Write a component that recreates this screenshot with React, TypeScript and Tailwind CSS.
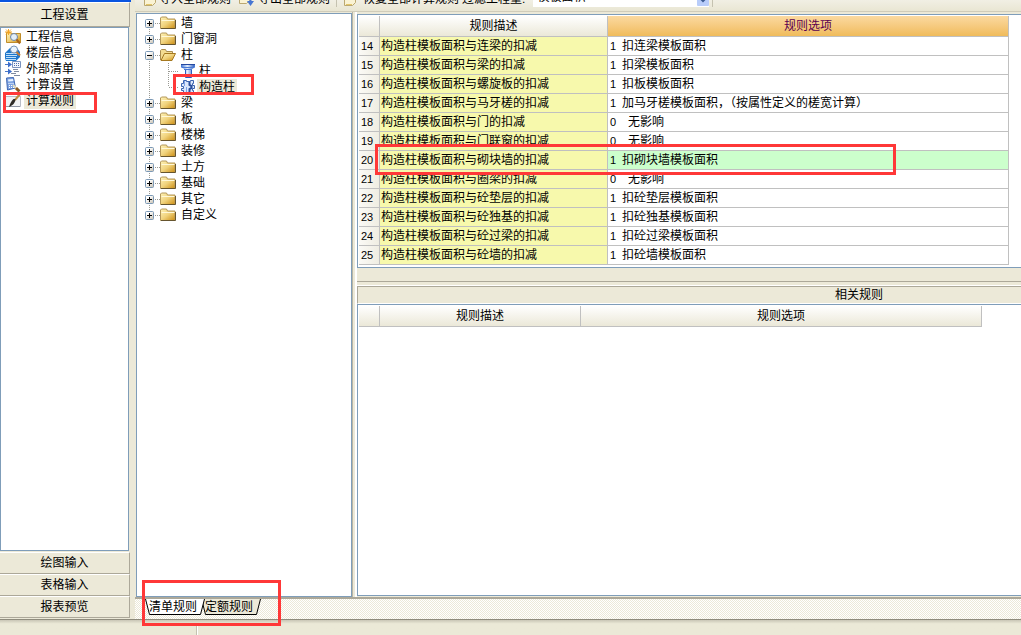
import { useState } from 'react';
import type { ReactNode } from 'react';
import clsx from 'clsx';

type Rule = {
  no: number;
  desc: string;
  code: number;
  option: string;
};

type TreeNode = {
  label: string;
  open?: boolean;
  children?: { label: string; icon: ReactNode }[];
};

const rules: Rule[] = [
  { no: 14, desc: '构造柱模板面积与连梁的扣减', code: 1, option: '扣连梁模板面积' },
  { no: 15, desc: '构造柱模板面积与梁的扣减', code: 1, option: '扣梁模板面积' },
  { no: 16, desc: '构造柱模板面积与螺旋板的扣减', code: 1, option: '扣板模板面积' },
  { no: 17, desc: '构造柱模板面积与马牙槎的扣减', code: 1, option: '加马牙槎模板面积，（按属性定义的槎宽计算）' },
  { no: 18, desc: '构造柱模板面积与门的扣减', code: 0, option: '无影响' },
  { no: 19, desc: '构造柱模板面积与门联窗的扣减', code: 0, option: '无影响' },
  { no: 20, desc: '构造柱模板面积与砌块墙的扣减', code: 1, option: '扣砌块墙模板面积' },
  { no: 21, desc: '构造柱模板面积与圈梁的扣减', code: 0, option: '无影响' },
  { no: 22, desc: '构造柱模板面积与砼垫层的扣减', code: 1, option: '扣砼垫层模板面积' },
  { no: 23, desc: '构造柱模板面积与砼独基的扣减', code: 1, option: '扣砼独基模板面积' },
  { no: 24, desc: '构造柱模板面积与砼过梁的扣减', code: 1, option: '扣砼过梁模板面积' },
  { no: 25, desc: '构造柱模板面积与砼墙的扣减', code: 1, option: '扣砼墙模板面积' },
];

// shared gradients used by all the small icons
function IconDefs() {
  return (
    <svg width="0" height="0" className="absolute" aria-hidden="true">
      <defs>
        <linearGradient id="gold" x1="0" y1="0" x2="1" y2="1">
          <stop offset="0" stopColor="#fff3b8" />
          <stop offset="0.5" stopColor="#f0d27c" />
          <stop offset="1" stopColor="#cc8d12" />
        </linearGradient>
        <linearGradient id="blue" x1="0" y1="0" x2="1" y2="0">
          <stop offset="0" stopColor="#4b7edb" />
          <stop offset="0.45" stopColor="#e6effd" />
          <stop offset="1" stopColor="#2f5fc0" />
        </linearGradient>
        <linearGradient id="box" x1="0" y1="0" x2="1" y2="1">
          <stop offset="0.3" stopColor="#ffffff" />
          <stop offset="1" stopColor="#c6beae" />
        </linearGradient>
        <pattern id="checker" width="2" height="2" patternUnits="userSpaceOnUse">
          <rect width="2" height="2" fill="#ffffff" />
          <path d="M0 0h1v1H0zM1 1h1v1H1z" fill="#ece9d8" />
        </pattern>
      </defs>
    </svg>
  );
}

function Icon({ children }: { children: ReactNode }) {
  return (
    <svg width="16" height="16" viewBox="0 0 16 16" className="shrink-0" aria-hidden="true">
      {children}
    </svg>
  );
}

const folderIcon = (
  <Icon>
    <path d="M.5 4v-1l1-1h5l1 2h7.500v9.500H.5z" fill="url(#gold)" stroke="#b3975a" />
    <path d="M1.500 5.500h13" stroke="#fff8d8" />
    <path d="M15.500 5v8.500H1" fill="none" stroke="#66552f" />
  </Icon>
);

const openFolderIcon = (
  <Icon>
    <path d="M.5 13V3.500l1-1h4l1 2h6v3" fill="#f3dc92" stroke="#a98c50" />
    <path d="M1 13.500 4.500 6.500h11l-3.500 7z" fill="url(#gold)" stroke="#a5781f" />
  </Icon>
);

const columnIcon = (
  <Icon>
    <path d="M1.500 1.500h13v3l-3 2v8h-6v-8l-4-2z" fill="url(#blue)" />
    <path d="M1 1.500h14" stroke="#2448a0" />
    <path d="M1.500 2v2.500M14.500 2v2.500M2 4.500h12M4 6.500h8" stroke="#4a7ad6" />
    <path d="M5.500 7v7.500h6V7" fill="none" stroke="#2c5cc0" />
  </Icon>
);

const toothedColumnIcon = (
  <Icon>
    <path
      d="M3.500 1.500h3v1h4v-1h3v3h-1v2h2v3h-2v2h1v3h-10v-3h-2v-2h2v-2h-2v-3h2z"
      fill="#dbe7fb"
      stroke="#3c64b0"
    />
    <path d="M4.500 2v5M6.500 8v6" stroke="#7ea3e6" />
    <path d="M9.500 3v3l2 1v2l-2 1v4" fill="none" stroke="#2a4f9c" strokeWidth="2" />
  </Icon>
);

const projectInfoIcon = (
  <Icon>
    <path d="M1.500 3.500h4l1 1h9v9h-14z" fill="url(#gold)" stroke="#c08d2a" />
    <path d="M3.500 0v6M0 3h7M1 .5l5 5M6 .5l-5 5" stroke="#f5a623" />
    <circle cx="9" cy="8" r="3.500" fill="#e3effa" stroke="#6f86a8" />
    <path d="m11.500 10.500 3.500 4" stroke="#a8651c" strokeWidth="2" />
  </Icon>
);

const floorInfoIcon = (
  <Icon>
    <path d="m0 8 5-5h7l3 4v5l-4 4H1l-1-3z" fill="#1f78cc" />
    <path d="M1 8.500h11M1 10.500h11M1 12.500h10M1 14.500h10" stroke="#bfe0fa" />
    <circle cx="9" cy="4.500" r="3.500" fill="#eaf4fc" stroke="#7792b4" />
    <path d="m11.500 7 3.500 3.500" stroke="#c07a35" strokeWidth="2" />
  </Icon>
);

const externalListIcon = (
  <Icon>
    <path d="M0 3.500h4M0 10.500h4" stroke="#4b79c8" />
    <path d="m3 .5 4 3-4 3zM3 7.500l4 3-4 3z" fill="#3c6ecb" />
    <path d="M7.500.5h8v6h-8z" fill="#f4f7fc" stroke="#7a93be" />
    <path d="M9 2.500h6M9 4.500h6" stroke="#4d6da8" strokeDasharray="1 1" />
    <path d="M8 8.500h5M9 10.500h5M6 12.500h5M9 14.500h6" stroke="#7f8ba1" />
  </Icon>
);

const calcSettingIcon = (
  <Icon>
    <path d="m1.500 1 7-.5 2 10.500-8 2z" fill="#7fa4e2" stroke="#4068b4" />
    <path d="m3 2.500 5-.5.4 2-5 .5z" fill="#e9f3ff" />
    <path d="M3.500 6.500h5M4 8.500h5M4 10.500h5" stroke="#fff" strokeDasharray="1 1" />
    <path d="m8 8 4 4" stroke="#e2dcc0" strokeWidth="2" />
    <path d="m11 11 3.500 3.500" stroke="#8a5a22" strokeWidth="3" />
  </Icon>
);

const calcRuleIcon = (
  <Icon>
    <path d="M.5 3.500h15v10H.5z" fill="#f1f2f4" stroke="#b9bdc6" />
    <path d="M0 13.500h15" stroke="#8f96a5" />
    <path d="m15 1-5 6" stroke="#c08d3c" strokeWidth="2" />
    <path d="M10.500 6c0 3-2 6-6.500 8 1-3 2-6 4.500-8z" fill="#2d2a26" />
  </Icon>
);

const sheetArrowIcon = (
  <Icon>
    <path d="M1.500 0v14.500h8l3-3V0z" fill="#faf3d4" stroke="#bba871" />
    <path d="M3 13.500h6" stroke="#e3c66a" />
    <path d="m9 8 3-3 3 3" fill="#7fa3e6" stroke="#5b83d0" />
  </Icon>
);

const exportIcon = (
  <Icon>
    <path d="M.5 0v12.500h7l3-3V0z" fill="#faf3d4" stroke="#bba871" />
    <path d="M11.500 2v9" stroke="#4776d2" strokeWidth="2" />
    <path d="M8 10h7l-3.500 5z" fill="#4776d2" />
  </Icon>
);

const tree: TreeNode[] = [
  { label: '墙' },
  { label: '门窗洞' },
  {
    label: '柱',
    open: true,
    children: [
      { label: '柱', icon: columnIcon },
      { label: '构造柱', icon: toothedColumnIcon },
    ],
  },
  { label: '梁' },
  { label: '板' },
  { label: '楼梯' },
  { label: '装修' },
  { label: '土方' },
  { label: '基础' },
  { label: '其它' },
  { label: '自定义' },
];

const settings = [
  { label: '工程信息', icon: projectInfoIcon },
  { label: '楼层信息', icon: floorInfoIcon },
  { label: '外部清单', icon: externalListIcon },
  { label: '计算设置', icon: calcSettingIcon },
  { label: '计算规则', icon: calcRuleIcon },
];

// red annotation frame drawn over the element it belongs to
function Mark({ className }: { className: string }) {
  return <span className={clsx('absolute z-10 border-3 border-[#ff3838] pointer-events-none', className)} />;
}

function Expander({ open, first, last }: { open?: boolean; first: boolean; last: boolean }) {
  return (
    <svg width="15" height="16" viewBox="0 0 15 16" className="shrink-0" aria-hidden="true">
      <g stroke="#9a9a94" strokeDasharray="1 1">
        {!first && <path d="M4.500 0v4" />}
        {!last && <path d="M4.500 14v2" />}
        <path d="M10 8.500h5" />
      </g>
      <rect x="0.5" y="4.500" width="8" height="8" rx="1" fill="url(#box)" stroke="#7b98b5" />
      <path d={open ? 'M2 8.500h5' : 'M2 8.500h5M4.500 6v5'} stroke="#000" />
    </svg>
  );
}

function Branch({ last }: { last: boolean }) {
  return (
    <svg width="35" height="16" viewBox="0 0 35 16" className="shrink-0" aria-hidden="true">
      <g stroke="#9a9a94" strokeDasharray="1 1">
        <path d="M4.500 0v16" />
        <path d={last ? 'M23.500 0v8' : 'M23.500 0v16'} />
        <path d="M24 8.500h10" />
      </g>
    </svg>
  );
}

function Sidebar() {
  const [active, setActive] = useState('计算规则');
  return (
    <aside className="w-[131px] shrink-0 flex flex-col border-t-2 border-[#0a55e0]">
      <div className="flex-1 flex flex-col mr-px pb-px">
        <button className="h-[25px] shrink-0 border-t border-t-white border-b border-b-[#aca899] border-r border-r-[#aca899] bg-[#ece9d8]">
          工程设置
        </button>
        <ul className="flex-1 bg-white border border-[#7f9db9] mr-px mb-px pt-px pl-1">
          {settings.map((item) => (
            <li key={item.label} className="relative h-4 flex items-center">
              <button className="flex items-center" onClick={() => setActive(item.label)}>
                {item.icon}
                <span className={clsx('ml-[3px] px-0.5', active === item.label && 'bg-[#ece9d8]')}>
                  {item.label}
                </span>
              </button>
              {item.label === '计算规则' && <Mark className="-left-[2px] -top-px w-[94px] h-[21px]" />}
            </li>
          ))}
        </ul>
        {['绘图输入', '表格输入', '报表预览'].map((label) => (
          <button
            key={label}
            className="h-[22px] shrink-0 border-t border-t-white border-b border-b-[#aca899] border-r border-r-[#aca899] bg-[#ece9d8]"
          >
            {label}
          </button>
        ))}
      </div>
    </aside>
  );
}

function Toolbar() {
  return (
    <div className="h-[12px] shrink-0 overflow-hidden flex items-end border-b border-[#d0ccba] bg-linear-to-b from-[#f1efe4] to-[#e9e6d3] pb-1 pl-2 whitespace-nowrap">
      <button className="flex items-end h-4">
        {sheetArrowIcon}
        <span>导入全部规则</span>
      </button>
      <button className="flex items-end h-4 ml-2">
        {exportIcon}
        <span className="ml-[3px]">导出全部规则</span>
      </button>
      <div className="w-px h-4 bg-[#c5c2b0] mx-1.5" />
      <button className="flex items-end h-4">
        {sheetArrowIcon}
        <span className="ml-1">恢复全部计算规则</span>
      </button>
      <label htmlFor="quantity" className="ml-[3px] h-4">
        过滤工程量:
      </label>
      <div className="relative ml-2 w-[176px]">
        <select
          id="quantity"
          defaultValue="模板面积"
          className="appearance-none block w-full h-5 bg-white pl-1 leading-4 outline-none"
        >
          <option>模板面积</option>
        </select>
        <svg width="12" height="18" viewBox="0 0 12 18" className="absolute right-0 bottom-px pointer-events-none">
          <rect width="12" height="18" rx="1" fill="#b9cdfa" />
          <path d="m3 10 3 3 3-3" fill="none" stroke="#3d5c93" strokeWidth="2" />
        </svg>
      </div>
      <div className="w-px h-4 bg-[#c5c2b0] ml-[3px]" />
    </div>
  );
}

function ComponentTree() {
  const [selected, setSelected] = useState('构造柱');
  return (
    <div className="w-[216px] shrink-0 mt-px bg-white border border-[#7f9db9] pt-px pl-2">
      <ul>
        {tree.map((node, i) => (
          <li key={node.label}>
            <div className="h-4 flex items-center">
              <Expander open={node.open} first={i === 0} last={i === tree.length - 1} />
              {node.open ? openFolderIcon : folderIcon}
              <button className="ml-[3px] px-0.5">{node.label}</button>
            </div>
            {node.children && (
              <ul>
                {node.children.map((child, n) => (
                  <li key={child.label} className="relative h-4 flex items-center">
                    <Branch last={n === node.children!.length - 1} />
                    {child.icon}
                    <button
                      className={clsx('ml-px px-0.5', selected === child.label && 'bg-[#ece9d8]')}
                      onClick={() => setSelected(child.label)}
                    >
                      {child.label}
                    </button>
                    {child.label === '构造柱' && <Mark className="left-7 -top-[5px] w-[81px] h-[21px]" />}
                  </li>
                ))}
              </ul>
            )}
          </li>
        ))}
      </ul>
    </div>
  );
}

const headCell = 'h-[21px] border-r border-b border-[#c0c0c0] font-normal';
const greyHead = 'bg-linear-to-b from-white to-[#ebe8d8]';

function RuleTable() {
  return (
    <div className="h-[254px] shrink-0 overflow-hidden bg-white border border-r-0 border-[#7f9db9] pt-px pl-px">
      <table className="table-fixed w-[650px] border-separate border-spacing-0">
        <colgroup>
          <col className="w-[21px]" />
          <col className="w-[228px]" />
          <col className="w-[401px]" />
        </colgroup>
        <thead>
          <tr>
            <th className={clsx(headCell, greyHead)} />
            <th className={clsx(headCell, greyHead)}>规则描述</th>
            <th className={clsx(headCell, 'bg-linear-to-b from-[#fbd9a0] to-[#f0bb5a] text-[#5a0050]')}>规则选项</th>
          </tr>
        </thead>
        <tbody>
          {rules.map((rule) => (
            <tr key={rule.no} className="h-[19px]">
              <td className="border-r border-b border-[#c0c0c0] bg-linear-to-r from-[#fbfaf6] to-[#efede2] pl-0.5 text-[11px]">
                {rule.no}
              </td>
              <td className="relative border-r border-b border-[#c0c0c0] bg-[#f7f9ac] pl-px">
                {rule.desc}
                {rule.no === 20 && <Mark className="-left-[5px] -top-[7px] w-[521px] h-[31px]" />}
              </td>
              <td
                className={clsx(
                  'border-r border-b border-[#c0c0c0] pl-0.5',
                  rule.no === 20 ? 'bg-[#ccffcc]' : 'bg-white'
                )}
              >
                <span className={clsx('inline-block text-[11px]', rule.code === 1 ? 'w-3' : 'w-[18px]')}>
                  {rule.code}
                </span>
                {rule.option}
              </td>
            </tr>
          ))}
        </tbody>
      </table>
    </div>
  );
}

function RelatedRules() {
  return (
    <section className="flex-1 flex flex-col overflow-hidden border-t border-white">
      <h2 className="h-[18px] w-[1003px] shrink-0 flex items-center justify-center border-t border-l border-[#aca899] border-b border-b-white bg-[#ece9d8]">
        相关规则
      </h2>
      <div className="flex-1 bg-white border border-r-0 border-[#7f9db9] pt-px pl-px">
        <table className="table-fixed w-[623px] border-separate border-spacing-0">
          <colgroup>
            <col className="w-[21px]" />
            <col className="w-[201px]" />
            <col className="w-[401px]" />
          </colgroup>
          <thead>
            <tr>
              <th className={clsx(headCell, greyHead)} />
              <th className={clsx(headCell, greyHead)}>规则描述</th>
              <th className={clsx(headCell, greyHead)}>规则选项</th>
            </tr>
          </thead>
        </table>
      </div>
    </section>
  );
}

function SheetTabs() {
  const [tab, setTab] = useState('清单规则');
  return (
    <div className="relative h-[22px] shrink-0 flex items-start border-t-2 border-[#aca899] pl-[10px]">
      <svg className="absolute inset-0 w-full h-full" aria-hidden="true">
        <rect width="100%" height="100%" fill="url(#checker)" />
      </svg>
      {['清单规则', '定额规则'].map((label) => (
        <button
          key={label}
          onClick={() => setTab(label)}
          className={clsx('relative w-[60px] h-4 pr-1 not-first-of-type:-ml-1', tab === label && 'z-[1]')}
        >
          <svg width="60" height="16" viewBox="0 0 60 16" className="absolute inset-0" aria-hidden="true">
            <path d="M.5 0l4 15.500h51l4-15.500" fill={tab === label ? '#ffffff' : '#ece9d8'} stroke="#000" />
          </svg>
          <span className="relative">{label}</span>
        </button>
      ))}
      <Mark className="left-[7px] -top-[19px] w-[139px] h-[46px]" />
    </div>
  );
}

export default function App() {
  return (
    <div className="h-screen flex flex-col overflow-hidden bg-[#ece9d8] text-black text-[12px] leading-4 font-['Liberation_Sans','Noto_Sans_CJK_SC',sans-serif]">
      <IconDefs />
      <div className="flex-1 min-h-0 flex">
        <Sidebar />
        <main className="flex-1 min-w-0 flex flex-col ml-1">
          <Toolbar />
          <div className="flex-1 min-h-0 flex pl-px">
            <ComponentTree />
            <div className="w-[5px] shrink-0 border-l border-l-[#b8b5a4] border-r-2 border-r-white" />
            <div className="flex-1 min-w-0 flex flex-col pt-[2px] pb-px">
              <RuleTable />
              <div className="h-[14px] shrink-0 border-b border-[#aca899]" />
              <div className="h-[3px] shrink-0" />
              <RelatedRules />
            </div>
          </div>
          <SheetTabs />
        </main>
      </div>
      <footer className="h-4 shrink-0 flex border-t border-[#8f8c7d] bg-linear-to-b from-[#c9c6b6] from-0% to-[#ebe9d7] to-25% pt-1.5">
        <div className="w-[197px] border-r border-[#c5c2b0]" />
        <div className="flex-1 border-l border-white" />
      </footer>
    </div>
  );
}
